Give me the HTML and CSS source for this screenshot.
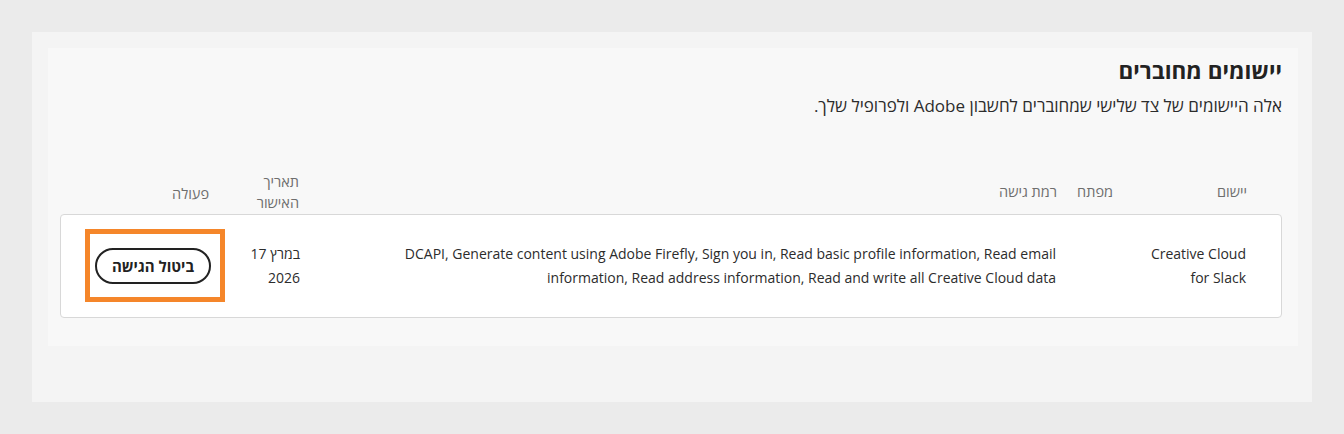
FILE: index.html
```html
<!DOCTYPE html>
<html lang="he" dir="rtl">
<head>
<meta charset="UTF-8">
<meta name="viewport" content="width=device-width, initial-scale=1.0">
<title>יישומים מחוברים</title>
<link rel="stylesheet" href="styles.css">
</head>
<body>

<div class="page">
    <div class="section">
        <h2 class="title">יישומים מחוברים</h2>
        <p class="subtitle">אלה היישומים של צד שלישי שמחוברים לחשבון Adobe ולפרופיל שלך.</p>

        <!-- כותרות הטבלה -->
        <div class="apps-head">
            <div class="col-app">יישום</div>
            <div class="col-key">מפתח</div>
            <div class="col-access">רמת גישה</div>
            <div class="col-date">תאריך האישור</div>
            <div class="col-action">פעולה</div>
        </div>

        <!-- שורת יישום -->
        <div class="apps-row">
            <div class="col-app"><div class="app-name">Creative Cloud for Slack</div></div>
            <div class="col-key"></div>
            <div class="col-access">
                <div class="access-text">DCAPI, Generate content using Adobe Firefly, Sign you in, Read basic profile information, Read email information, Read address information, Read and write all Creative Cloud data</div>
            </div>
            <div class="col-date">
                <div class="date-line">17 במרץ</div>
                <div>2026</div>
            </div>
            <div class="col-action">
                <div class="highlight">
                    <button class="revoke-btn">ביטול הגישה</button>
                </div>
            </div>
        </div>
    </div>
</div>

</body>
</html>
```

FILE: styles.css
```css
body {
    margin: 0;
    background-color: #ebebeb;
    font-family: "Open Sans", "Liberation Sans", sans-serif;
    color: #2c2c2c;
}

.page {
    margin: 32px;
    padding: 16px 14px 16px 16px;
    background-color: #f4f4f4;
    width: 1250px;
    height: 338px;
}

.section {
    background-color: #f8f8f8;
    height: 298px;
    padding: 7px 16px 0 12px;
    box-sizing: border-box;
}

.title {
    margin: 0;
    font-size: 22.5px;
    font-weight: 700;
    line-height: 32px;
    color: #222;
}

.subtitle {
    margin: 6px 0 0 0;
    font-size: 17px;
    line-height: 26px;
}

.apps-head,
.apps-row {
    display: grid;
    grid-template-columns: 118px 40px 1fr 59px 140px;
    column-gap: 16px;
    padding: 0 35px 0 24px;
}

.apps-head {
    margin-top: 50px;
    height: 44px;
    align-items: center;
    font-size: 14.5px;
    line-height: 21px;
    color: #6e6e6e;
}

.apps-head .col-date {
    padding-top: 2px;
}

.apps-head .col-action {
    padding-top: 4px;
    padding-right: 15px;
}

.apps-row {
    margin-top: 1px;
    background-color: #fff;
    border: 1px solid #d8d8d8;
    border-radius: 4px;
    padding-top: 14px;
    padding-bottom: 15px;
    align-items: center;
    font-size: 14px;
    line-height: 24px;
}

.app-name {
    max-width: 104px;
}

.access-text {
    max-width: 660px;
}

.date-line {
    direction: ltr;
    text-align: right;
}

.highlight {
    border: 5px solid #f5862a;
    padding: 14px 9px 13px 5px;
    display: flex;
}

.revoke-btn {
    width: 116px;
    height: 36px;
    border: 2px solid #222;
    border-radius: 18px;
    background-color: #fff;
    font-family: "Open Sans", "Liberation Sans", sans-serif;
    font-size: 15px;
    font-weight: 700;
    color: #222;
    cursor: pointer;
}
```
